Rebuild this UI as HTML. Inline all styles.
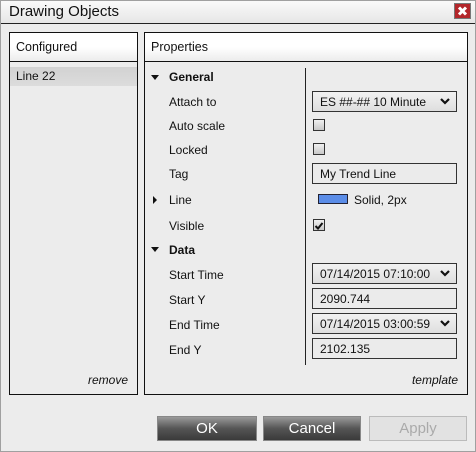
<!DOCTYPE html><html><head><style>
*{margin:0;padding:0;box-sizing:border-box}
body{width:476px;height:452px;background:#ececec;font-family:"Liberation Sans",sans-serif;font-size:12px;color:#111;position:relative;overflow:hidden}
.a{position:absolute}
.frame{left:0;top:0;width:476px;height:452px;border:1px solid #a0a0a0}
.title{left:0;top:0;width:476px;height:24px;background:linear-gradient(#fafafa,#e6e6e6);border-bottom:1px solid #222;border-top:1px solid #a0a0a0;border-left:1px solid #a0a0a0;border-right:1px solid #a0a0a0}
.title span{position:absolute;left:8px;top:2px;font-size:15px}
.close{left:454px;top:3px;width:17px;height:16px;background:#b3262a;border:1px solid #777}
.panel{border:1px solid #111;background:#ececec}
.hdr{position:absolute;left:0;right:0;top:0;height:29px;background:linear-gradient(#fff,#fff 50%,#ececec);border-bottom:1px solid #111}
.hdr span{position:absolute;left:6px;top:7px;font-size:12.5px}
.lbl{position:absolute;left:169px}
.bold{font-weight:bold}
.inp{position:absolute;left:312px;width:145px;height:21px;border:1px solid #333;background:#ebebeb;padding:3px 7px;font-size:12px}
.dd{background:linear-gradient(#f2f2f2,#dedede)}
.dd svg{position:absolute;right:6px;top:6px}
.cb{position:absolute;left:313px;width:12px;height:12px;border:1px solid #333;background:linear-gradient(#f0f0f0,#c8c8c8)}
.tri{position:absolute;left:151px;width:0;height:0}
.btn{position:absolute;top:416px;height:25px;color:#fff;font-size:15px;text-align:center;line-height:24px;background:linear-gradient(#9a9a9a,#555 50%,#3a3a3a);border:1px solid #888}
</style></head><body>
<div class="a title"><span>Drawing Objects</span></div>
<div class="a frame"></div>
<div class="a close"><svg width="15" height="14" viewBox="0 0 15 14"><path d="M4 3.5L11 10.5M11 3.5L4 10.5" stroke="#fff" stroke-width="3"/></svg></div>
<div class="a panel" style="left:9px;top:32px;width:129px;height:363px">
<div class="hdr"><span>Configured</span></div>
<div class="a" style="left:0;top:34px;width:127px;height:19px;background:linear-gradient(#d2d2d2,#dcdcdc);padding:2px 6px">Line 22</div>
<div class="a" style="right:9px;top:340px;font-style:italic">remove</div>
</div>
<div class="a panel" style="left:144px;top:32px;width:324px;height:363px">
<div class="hdr"><span>Properties</span></div>
<div class="a" style="right:9px;top:340px;font-style:italic">template</div>
<div class="a" style="left:160px;top:35px;width:1px;height:297px;background:#222"></div>
</div>
<div class="tri" style="top:75px;border-left:4px solid transparent;border-right:4px solid transparent;border-top:5px solid #111"></div>
<div class="lbl bold" style="top:70px">General</div>
<div class="lbl" style="top:95px">Attach to</div>
<div class="lbl" style="top:119px">Auto scale</div>
<div class="lbl" style="top:143px">Locked</div>
<div class="lbl" style="top:167px">Tag</div>
<div class="tri" style="top:196px;left:153px;border-top:4px solid transparent;border-bottom:4px solid transparent;border-left:4px solid #111"></div>
<div class="lbl" style="top:193px">Line</div>
<div class="lbl" style="top:219px">Visible</div>
<div class="tri" style="top:247px;border-left:4px solid transparent;border-right:4px solid transparent;border-top:5px solid #111"></div>
<div class="lbl bold" style="top:243px">Data</div>
<div class="lbl" style="top:268px">Start Time</div>
<div class="lbl" style="top:293px">Start Y</div>
<div class="lbl" style="top:318px">End Time</div>
<div class="lbl" style="top:343px">End Y</div>
<div class="inp dd" style="top:91px">ES ##-## 10 Minute<svg width="10" height="7" viewBox="0 0 10 7"><path d="M1 1L5 5L9 1" stroke="#111" stroke-width="2.2" fill="none"/></svg></div>
<div class="cb" style="top:119px"></div>
<div class="cb" style="top:143px"></div>
<div class="inp" style="top:163px">My Trend Line</div>
<div class="a" style="left:318px;top:194px;width:30px;height:10px;background:#5b8de8;border:1px solid #223"></div>
<div class="a" style="left:354px;top:193px">Solid, 2px</div>
<div class="cb" style="top:219px"><svg width="10" height="10" viewBox="0 0 10 10"><path d="M1.5 5L4 7.5L8.5 2" stroke="#111" stroke-width="2" fill="none"/></svg></div>
<div class="inp dd" style="top:263px">07/14/2015 07:10:00<svg width="10" height="7" viewBox="0 0 10 7"><path d="M1 1L5 5L9 1" stroke="#111" stroke-width="2.2" fill="none"/></svg></div>
<div class="inp" style="top:288px">2090.744</div>
<div class="inp dd" style="top:313px">07/14/2015 03:00:59<svg width="10" height="7" viewBox="0 0 10 7"><path d="M1 1L5 5L9 1" stroke="#111" stroke-width="2.2" fill="none"/></svg></div>
<div class="inp" style="top:338px">2102.135</div>
<div class="btn" style="left:157px;width:100px">OK</div>
<div class="btn" style="left:263px;width:98px">Cancel</div>
<div class="btn" style="left:369px;width:98px;background:#e2e2e2;color:#aaa;border-color:#bbb">Apply</div>
</body></html>
